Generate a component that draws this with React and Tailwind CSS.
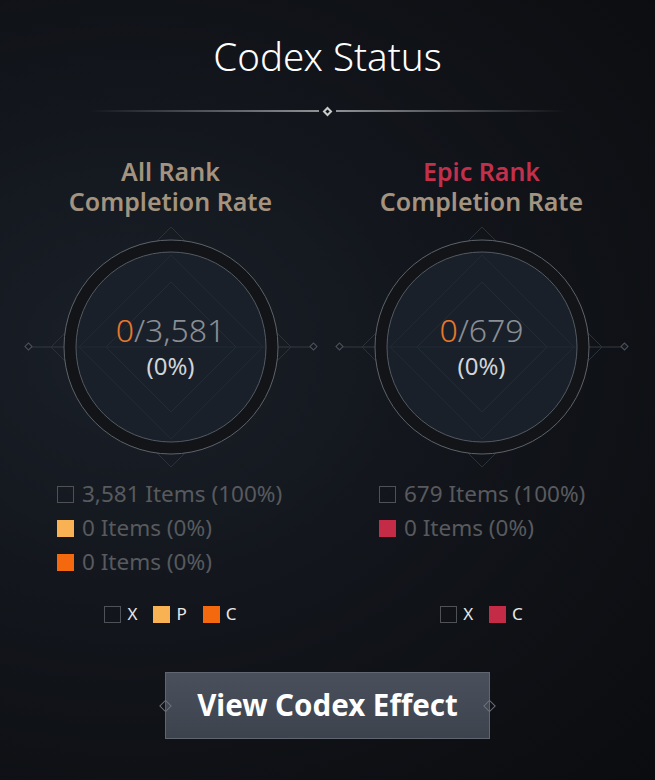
import React from "react";

const ringDecor = (
  <svg width="300" height="250" viewBox="0 0 300 250" className="block">
    {/* axis line + end gems */}
    <line x1="10" y1="125" x2="290" y2="125" stroke="#323842" strokeWidth="1" />
    <rect x="5" y="122" width="5" height="5" transform="rotate(45 7.5 124.5)" fill="#161a20" stroke="#4d535c" />
    <rect x="290" y="122" width="5" height="5" transform="rotate(45 292.5 124.5)" fill="#161a20" stroke="#4d535c" />
    {/* outer diamond */}
    <polygon points="150,5 270,125 150,245 30,125" fill="none" stroke="#2a313a" strokeWidth="1" />
    {/* ring */}
    <circle cx="150" cy="125" r="107" fill="#121418" stroke="#5e636a" strokeWidth="1" />
    <circle cx="150" cy="125" r="95" fill="#19202a" stroke="#545a62" strokeWidth="1" />
    {/* faint pattern inside */}
    <polygon points="150,33 242,125 150,217 58,125" fill="none" stroke="#212832" strokeWidth="1" />
    <polygon points="150,60 215,125 150,190 85,125" fill="none" stroke="#232b35" strokeWidth="1" />
    <line x1="56" y1="125" x2="244" y2="125" stroke="#212832" strokeWidth="1" />
  </svg>
);

const Box = ({ color }) =>
  color ? (
    <span className="inline-block w-[17px] h-[17px] shrink-0" style={{ background: color }} />
  ) : (
    <span className="inline-block w-[17px] h-[17px] shrink-0 border border-[#4f5156]" />
  );

const RankColumn = ({ title, titleColor, done, total, rows, keys, legendPad }) => (
  <div className="flex flex-col items-center">
    <div className="text-center text-[25px] leading-[30px] font-semibold">
      <div style={{ color: titleColor }}>{title}</div>
      <div className="text-[#a3937f]">Completion Rate</div>
    </div>

    <div className="relative mt-[6px]">
      {ringDecor}
      <div className="absolute inset-0 flex flex-col items-center justify-center pt-[2px]">
        <div className="text-[32px] leading-[36px] font-light">
          <span className="text-[#e8772b]">{done}</span>
          <span className="text-[#8b8e93]">/{total}</span>
        </div>
        <div className="text-[24px] leading-[36px] text-[#d2d4d7]">(0%)</div>
      </div>
    </div>

    <div className={"self-stretch mt-[5px] h-[102px] " + legendPad}>
      {rows.map((r, i) => (
        <div key={i} className="flex items-center gap-[8px] h-[34px] text-[22.5px] text-[#585a5e]">
          <Box color={r.color} />
          <span>{r.label}</span>
        </div>
      ))}
    </div>

    <div className="mt-[25px] h-[20px] flex items-center gap-[16px]">
      {keys.map((k) => (
        <div key={k.letter} className="flex items-center gap-[6px] text-[17px] text-[#e8e8e8]">
          <Box color={k.color} />
          <span>{k.letter}</span>
        </div>
      ))}
    </div>
  </div>
);

const App = () => {
  return (
    <div className="w-[655px] h-[780px] overflow-hidden font-['Noto_Sans',sans-serif] bg-[radial-gradient(ellipse_at_20%_45%,#1a2029_0%,#12151b_45%,#0b0c0f_100%)]">
      <div className="pt-[33px] text-center text-[38.5px] leading-[46px] font-light text-white">
        Codex Status
      </div>

      {/* divider */}
      <div className="mt-[26px] flex items-center justify-center h-[12px]">
        <div className="w-[230px] h-[2px] bg-[linear-gradient(90deg,transparent,#8e9196)]" />
        <div className="mx-[5px] w-[7px] h-[7px] rotate-45 border-2 border-[#c9cacc] bg-[#111317]" />
        <div className="w-[230px] h-[2px] bg-[linear-gradient(90deg,#8e9196,transparent)]" />
      </div>

      <div className="mt-[39px] pl-[15px] pr-[18px] grid grid-cols-2">
        <RankColumn
          title="All Rank"
          titleColor="#a3937f"
          done="0"
          total="3,581"
          legendPad="pl-[42px]"
          rows={[
            { color: null, label: "3,581 Items (100%)" },
            { color: "#f8b254", label: "0 Items (0%)" },
            { color: "#f5690e", label: "0 Items (0%)" },
          ]}
          keys={[
            { color: null, letter: "X" },
            { color: "#f8b254", letter: "P" },
            { color: "#f5690e", letter: "C" },
          ]}
        />
        <RankColumn
          title="Epic Rank"
          titleColor="#c3304c"
          done="0"
          total="679"
          legendPad="pl-[53px]"
          rows={[
            { color: null, label: "679 Items (100%)" },
            { color: "#c42b46", label: "0 Items (0%)" },
          ]}
          keys={[
            { color: null, letter: "X" },
            { color: "#c42b46", letter: "C" },
          ]}
        />
      </div>

      <div className="mt-[48px] flex justify-center">
        <button className="relative w-[325px] h-[67px] border border-[#5f666f] bg-[linear-gradient(180deg,#4a505b_0%,#434a55_50%,#3d434d_100%)] text-white text-[29.5px] font-bold">
          <span className="absolute left-[-5px] top-1/2 -translate-y-1/2 w-[9px] h-[9px] rotate-45 border border-[#6d737b]" />
          <span className="absolute right-[-5px] top-1/2 -translate-y-1/2 w-[9px] h-[9px] rotate-45 border border-[#6d737b]" />
          View Codex Effect
        </button>
      </div>
    </div>
  );
};

export default App;
